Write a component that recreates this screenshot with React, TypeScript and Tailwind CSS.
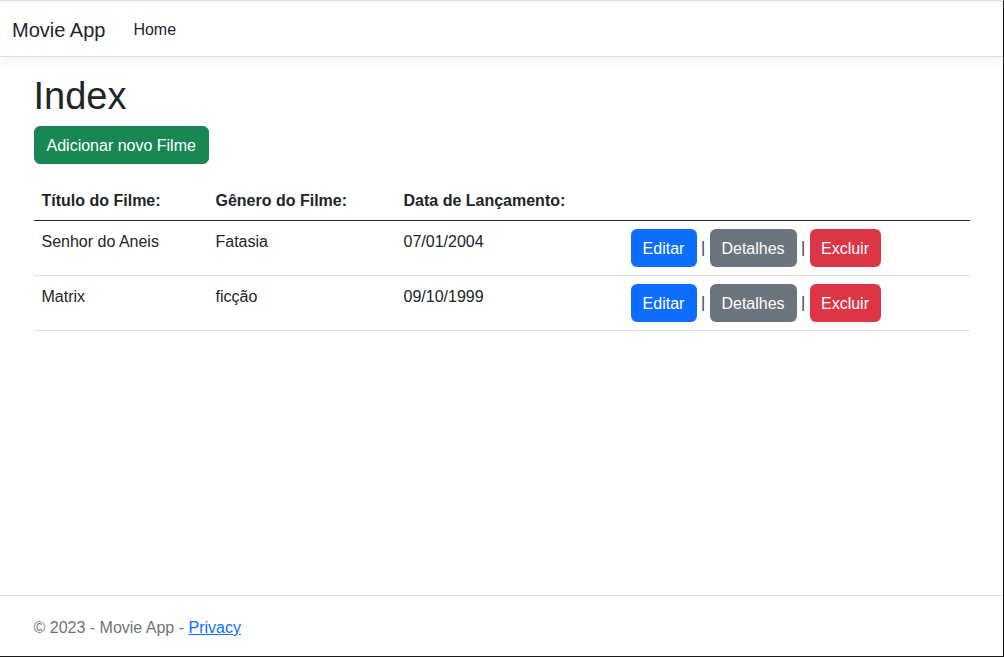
import React from "react";

const rows = [
  { titulo: "Senhor do Aneis", genero: "Fatasia", data: "07/01/2004" },
  { titulo: "Matrix", genero: "ficção", data: "09/10/1999" },
];

export default function App() {
  return (
    <div
      className="w-[1004px] h-[657px] flex flex-col bg-white text-[#212529] border-t border-t-[#dcdcdc] border-r border-r-[#1a1a1a] border-b border-b-[#1a1a1a] overflow-hidden"
      style={{ fontFamily: '"Liberation Sans", Arial, sans-serif' }}
    >
      <nav className="h-[56px] shrink-0 border-b border-[#dedede] shadow-[0_4px_12px_rgba(0,0,0,0.05)] flex items-center px-3 pt-[3px] relative z-10">
        <span className="text-[20px] leading-[30px] mr-[20px] text-[#212529]">Movie App</span>
        <span className="text-[16px] leading-6 px-2 text-[#212529]">Home</span>
      </nav>
      <main className="flex-1 pt-4">
        <div className="w-[936px] mx-auto">
          <h1 className="text-[38px] leading-[44.5px] font-medium mb-[7px] pt-px text-[#212529]">Index</h1>
          <p className="mb-4">
            <button className="h-[38px] px-3 pt-[2px] rounded-[6px] bg-[#198754] text-white text-[16px] leading-6 border border-[#198754]">
              Adicionar novo Filme
            </button>
          </p>
          <table className="w-full border-collapse text-[16px] leading-6">
            <thead>
              <tr className="border-b border-[#212529]">
                <th className="w-[174px] text-left font-bold px-2 pt-[9px] pb-[7px]">Título do Filme:</th>
                <th className="w-[188px] text-left font-bold px-2 pt-[9px] pb-[7px]">Gênero do Filme:</th>
                <th className="w-[227px] text-left font-bold px-2 pt-[9px] pb-[7px]">Data de Lançamento:</th>
                <th className="px-2 pt-[9px] pb-[7px]"></th>
              </tr>
            </thead>
            <tbody>
              {rows.map((r) => (
                <tr key={r.titulo} className="border-b border-[#dee2e6]">
                  <td className="px-2 pt-[9px] align-top">{r.titulo}</td>
                  <td className="px-2 pt-[9px] align-top">{r.genero}</td>
                  <td className="px-2 pt-[9px] align-top">{r.data}</td>
                  <td className="p-2 align-top">
                    <div className="flex items-center">
                      <button className="h-[38px] w-[66px] pt-[2px] rounded-[6px] bg-[#0d6efd] text-white text-[16px]">Editar</button>
                      <span className="w-[13px] text-center text-[#3a4250] pt-px">|</span>
                      <button className="h-[38px] w-[87px] pt-[2px] rounded-[6px] bg-[#6c757d] text-white text-[16px]">Detalhes</button>
                      <span className="w-[13px] text-center text-[#3a4250] pt-px">|</span>
                      <button className="h-[38px] w-[71px] pt-[2px] rounded-[6px] bg-[#dc3545] text-white text-[16px]">Excluir</button>
                    </div>
                  </td>
                </tr>
              ))}
            </tbody>
          </table>
        </div>
      </main>
      <footer className="h-[61px] shrink-0 border-t border-[#dee2e6] text-[#6c757d] text-[16px] leading-[60px] pt-[2px]">
        <div className="w-[936px] mx-auto">
          © 2023 - Movie App - <a className="text-[#0d6efd] underline">Privacy</a>
        </div>
      </footer>
    </div>
  );
}
